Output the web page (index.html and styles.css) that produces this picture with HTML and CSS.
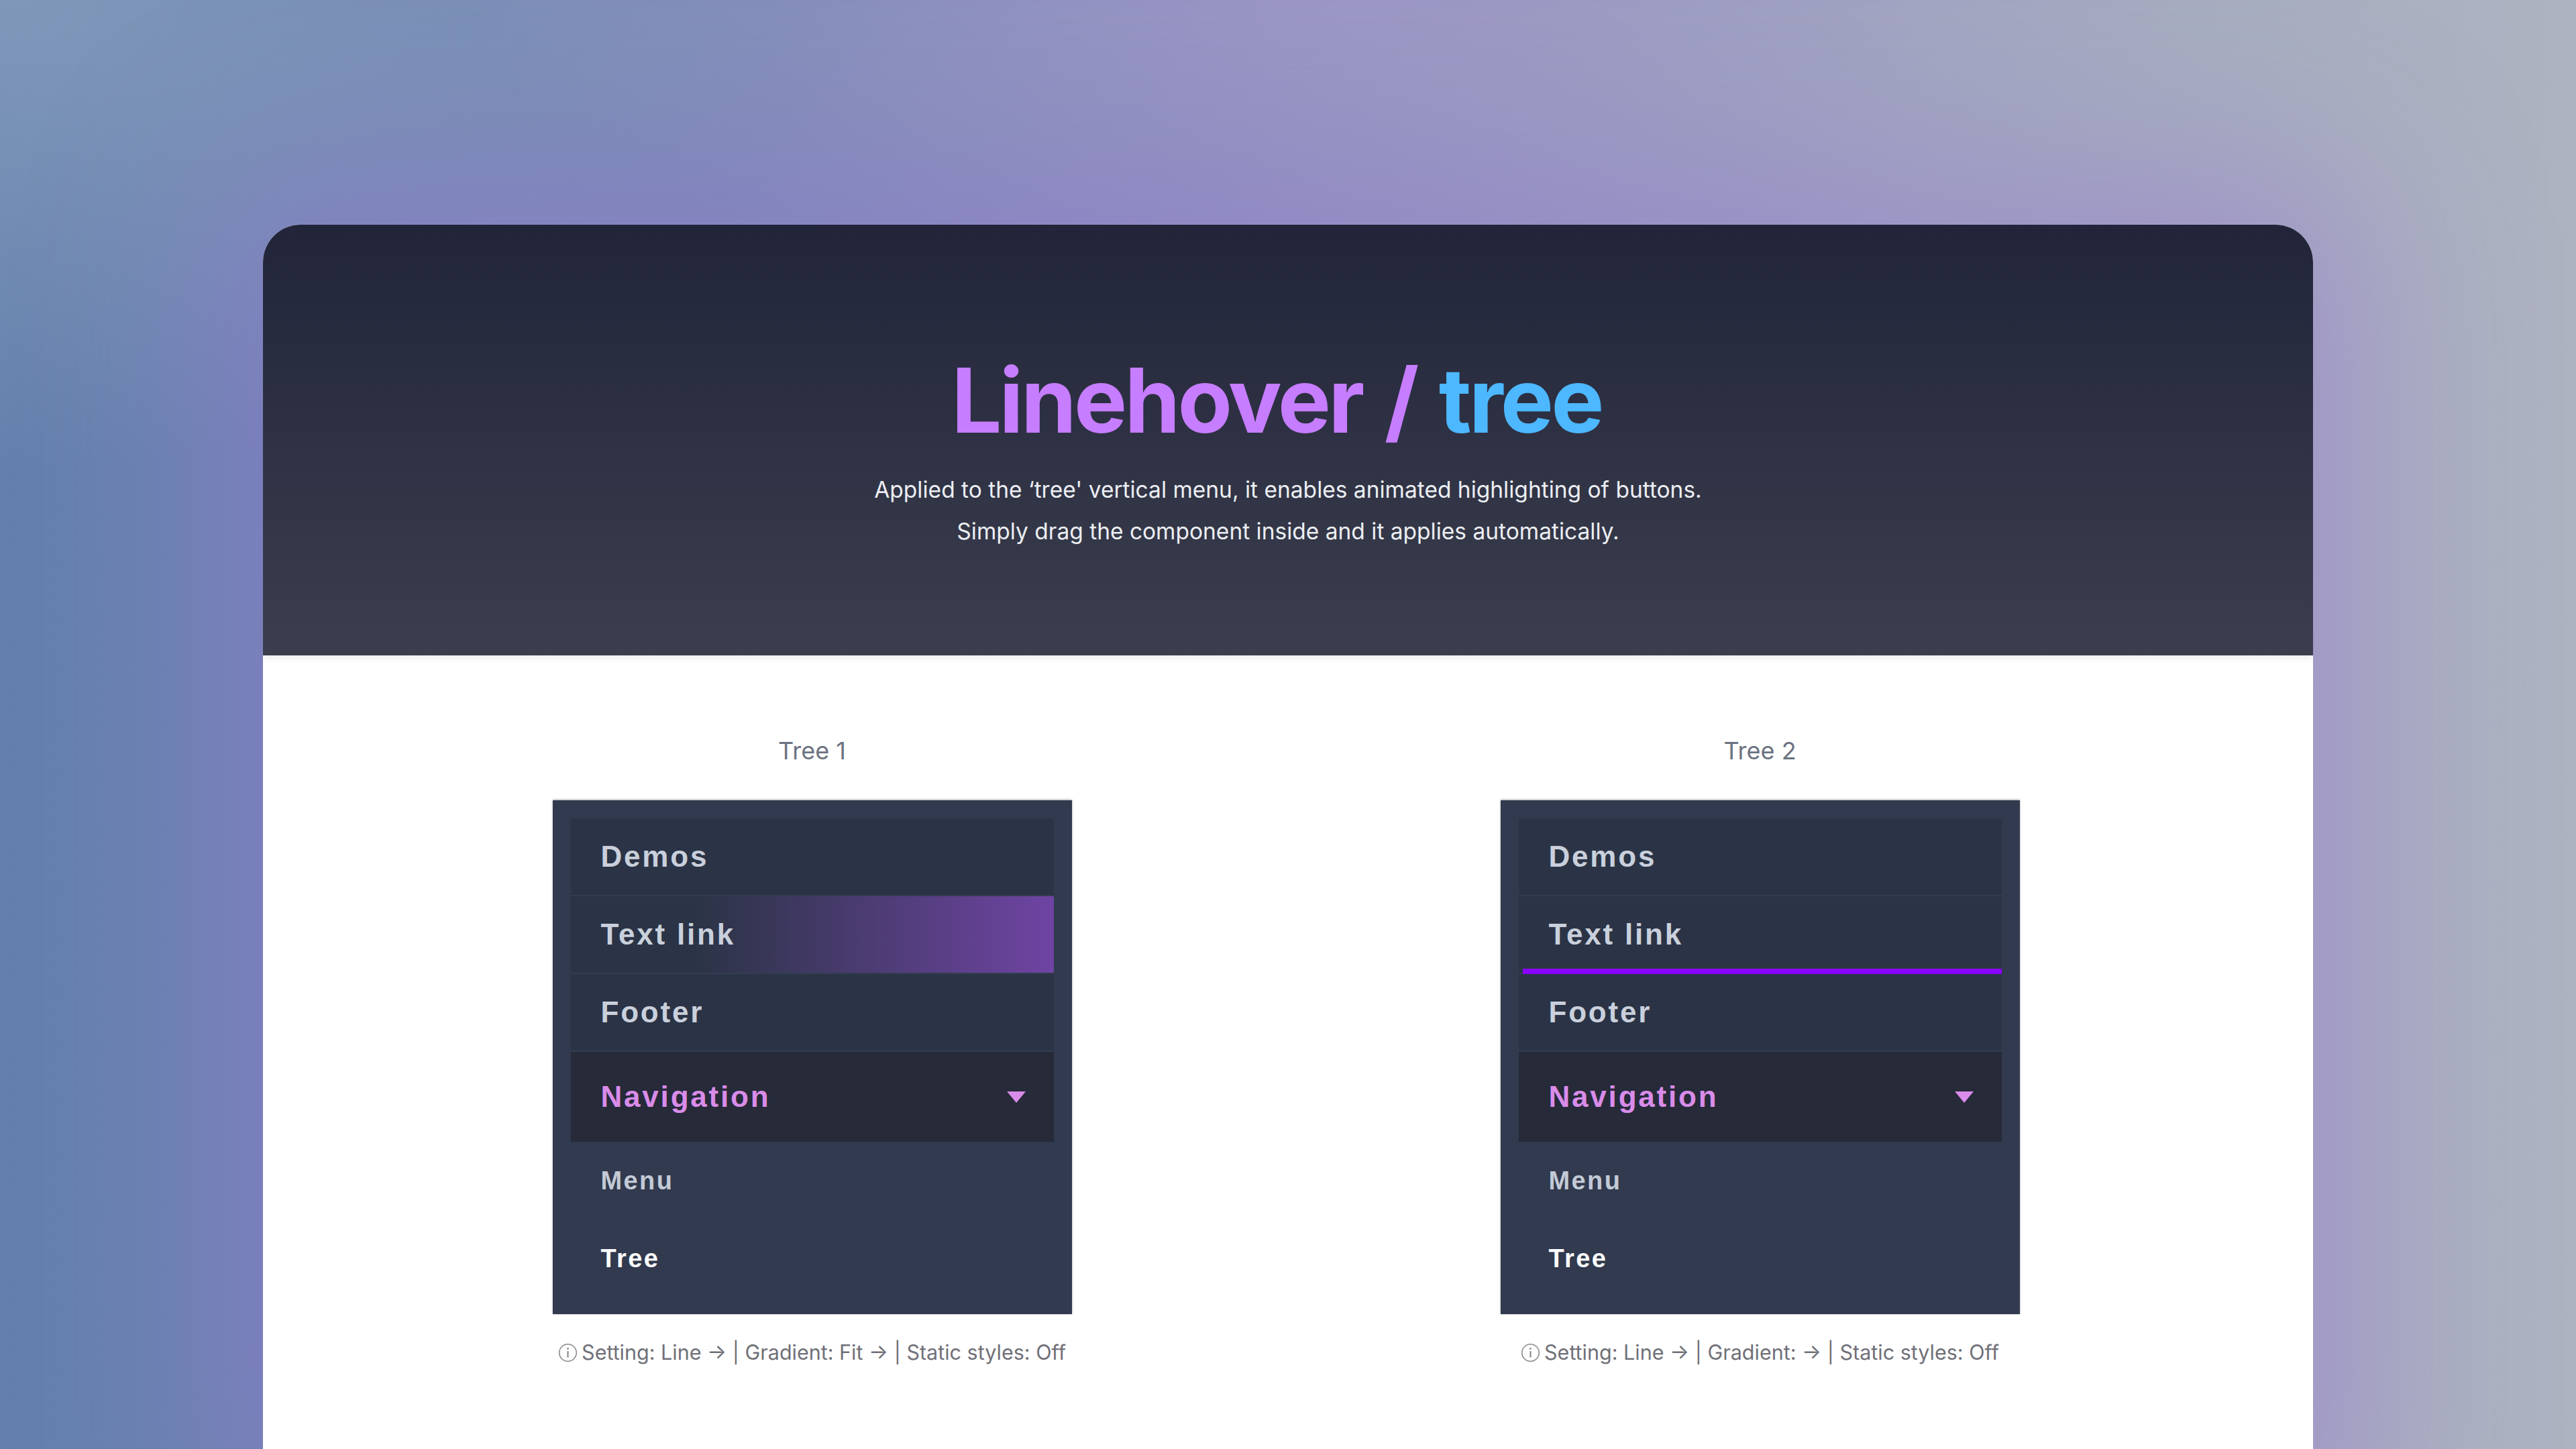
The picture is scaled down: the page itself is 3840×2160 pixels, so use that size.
FILE: index.html
```html
<!DOCTYPE html>
<html lang="en">
<head>
    <meta charset="UTF-8">
    <meta name="viewport" content="width=device-width, initial-scale=1.0">
    <title>Linehover / tree</title>
    <link rel="stylesheet" href="styles.css">
</head>
<body>
    <div class="page">
        <div class="card">
            <header class="hero">
                <h1><span class="accent">Linehover /</span> <span class="blue">tree</span></h1>
                <p>Applied to the ‘tree' vertical menu, it enables animated highlighting of buttons.<br>
                Simply drag the component inside and it applies automatically.</p>
            </header>

            <section class="demos">
                <div class="demo">
                    <div class="demo-title">Tree 1</div>
                    <nav class="tree">
                        <a class="item">Demos</a>
                        <a class="item fill">Text link</a>
                        <a class="item">Footer</a>
                        <a class="item open">Navigation <span class="caret"></span></a>
                        <a class="sub">Menu</a>
                        <a class="sub current">Tree</a>
                    </nav>
                    <div class="note">
                        <svg class="info" viewBox="0 0 20 20"><circle cx="10" cy="10" r="8.8" fill="none" stroke="currentColor" stroke-width="1.1"/><path d="M10 8.4v6.4" stroke="currentColor" stroke-width="1.5"/><circle cx="10" cy="5.8" r="0.95" fill="currentColor"/></svg>
                        Setting: Line → | Gradient: Fit → | Static styles: Off
                    </div>
                </div>

                <div class="demo">
                    <div class="demo-title">Tree 2</div>
                    <nav class="tree">
                        <a class="item">Demos</a>
                        <a class="item line">Text link</a>
                        <a class="item">Footer</a>
                        <a class="item open">Navigation <span class="caret"></span></a>
                        <a class="sub">Menu</a>
                        <a class="sub current">Tree</a>
                    </nav>
                    <div class="note">
                        <svg class="info" viewBox="0 0 20 20"><circle cx="10" cy="10" r="8.8" fill="none" stroke="currentColor" stroke-width="1.1"/><path d="M10 8.4v6.4" stroke="currentColor" stroke-width="1.5"/><circle cx="10" cy="5.8" r="0.95" fill="currentColor"/></svg>
                        Setting: Line → | Gradient: → | Static styles: Off
                    </div>
                </div>
            </section>
        </div>
    </div>
</body>
</html>
```

FILE: styles.css
```css
body {
    margin: 0;
    height: 100vh;
    overflow: hidden;
    font-family: Inter, "Liberation Sans", sans-serif;
    background:
        radial-gradient(ellipse 1300px 420px at 52% 0%, rgba(165, 150, 205, 0.55), transparent),
        radial-gradient(ellipse 1200px 700px at 0% 0%, rgba(150, 170, 195, 0.55), transparent),
        linear-gradient(to right, #6380ad 0%, #8a93bb 45%, #a2a9bf 75%, #aeb3c1 100%);
}

.page {
    padding: 335px 392px 0;
}

.card {
    height: 1900px;
    border-radius: 56px 56px 0 0;
    overflow: hidden;
    background: #fff;
    box-shadow: 0 0 260px 70px rgba(150, 120, 210, 0.5);
}

/* dark top band */
.hero {
    position: relative;
    z-index: 1;
    height: 642px;
    box-sizing: border-box;
    padding-top: 195px;
    text-align: center;
    background: linear-gradient(to bottom, #22253a, #3a3e4d);
    box-shadow: 0 4px 10px rgba(0, 0, 0, 0.08);
}

.hero h1 {
    margin: 0;
    padding-right: 34px;
    font-size: 133px;
    line-height: 1;
    font-weight: 700;
    letter-spacing: -0.028em;
    word-spacing: 0.04em;
}

.accent {
    color: #c67dff;
}

.blue {
    color: #4db7ff;
}

.hero p {
    margin: 36px 0 0;
    font-size: 33.5px;
    line-height: 62px;
    color: #eceef2;
}

.demos {
    display: grid;
    grid-template-columns: 1fr 1fr;
    padding: 120px 118px 0 112px;
}

.demo {
    display: flex;
    flex-direction: column;
    align-items: center;
}

.demo-title {
    font-size: 36px;
    line-height: 44px;
    color: #6b7280;
    margin-bottom: 52px;
}

/* tree menu */
.tree {
    width: 774px;
    box-sizing: border-box;
    padding: 27px 27px 25px;
    background: #313a4e;
    box-shadow: 0 -1px 3px rgba(0, 0, 0, 0.35);
    display: flex;
    flex-direction: column;
    font-family: "Liberation Sans", Arial, sans-serif;
    font-weight: 700;
}

.item {
    position: relative;
    display: flex;
    align-items: center;
    height: 114px;
    padding: 0 42px 0 45px;
    background: #2b3446;
    border-bottom: 2px solid #343d51;
    font-size: 44px;
    letter-spacing: 2.8px;
    color: #c9d0dc;
}

.item.fill {
    background: linear-gradient(to right, #2b3446 26%, #6f44a3 100%);
}

.item.line::after {
    content: "";
    position: absolute;
    left: 6px;
    right: 0;
    bottom: -2px;
    height: 8px;
    background: #8a00ff;
}

.item.open {
    height: 134px;
    border-bottom: none;
    background: #262a39;
    color: #d98ce9;
    justify-content: space-between;
}

.caret {
    width: 0;
    height: 0;
    border-left: 14px solid transparent;
    border-right: 14px solid transparent;
    border-top: 17px solid #d98ce9;
}

.sub {
    display: flex;
    align-items: center;
    height: 116px;
    padding-left: 45px;
    font-size: 38px;
    letter-spacing: 2.4px;
    color: #c3cad6;
}

.sub.current {
    color: #fff;
}

.note {
    display: flex;
    align-items: center;
    gap: 6px;
    margin-top: 39px;
    font-size: 30.5px;
    line-height: 36px;
    color: #707078;
}

.info {
    width: 29px;
    height: 29px;
    color: #8a8a90;
}
```
